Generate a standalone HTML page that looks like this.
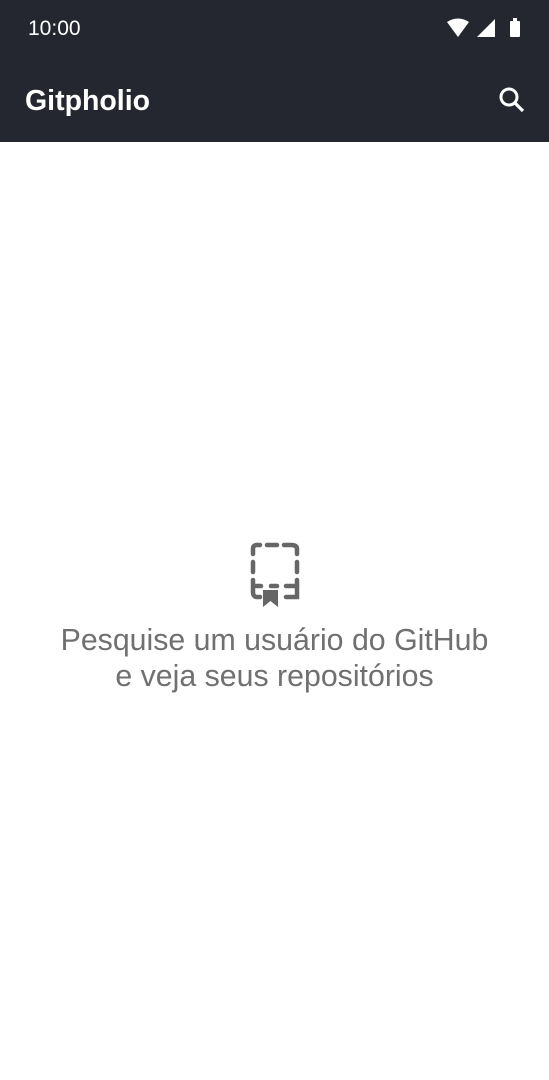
<!DOCTYPE html>
<html><head><meta charset="utf-8"><style>
body{margin:0;width:549px;height:1080px;background:#fff;font-family:"Liberation Sans",sans-serif;position:relative;overflow:hidden}
.bar{position:absolute;left:0;top:0;width:549px;height:142px;background:#24272f}
.time{position:absolute;left:28px;top:17px;color:#fff;font-size:21px}
.title{position:absolute;left:25px;top:85px;color:#fff;font-size:28.5px;font-weight:bold}
.msg{position:absolute;left:0;width:549px;top:623px;text-align:center;color:#707070;font-size:30.3px;line-height:36px}
</style></head><body>
<div class="bar">
<div class="time">10:00</div>
<svg style="position:absolute;left:447px;top:18px" width="80" height="22" viewBox="0 0 80 22">
<path d="M0 4 Q11 -3 22 4 L11 19 Z" fill="#fff"/>
<path d="M30 19 L48 19 L48 1 Z" fill="#fff"/>
<rect x="63" y="3" width="10" height="16" rx="1" fill="#fff"/><rect x="66" y="0" width="4" height="3" fill="#fff"/>
</svg>
<div class="title">Gitpholio</div>
<svg style="position:absolute;left:497px;top:85px" width="30" height="30" viewBox="0 0 30 30">
<circle cx="12" cy="12" r="8" stroke="#fff" stroke-width="3" fill="none"/>
<path d="M18 18 L26 26" stroke="#fff" stroke-width="3.2"/>
</svg>
</div>
<svg style="position:absolute;left:246px;top:540px" width="58" height="70" viewBox="0 0 58 70">
<g stroke="#666" stroke-width="4.5" fill="none" stroke-linecap="round">
<path d="M7 14 V9 Q7 5 11 5 H14"/>
<path d="M21 5 H31"/>
<path d="M38 5 H45 Q51 5 51 9 V14"/>
<path d="M7 22 V32"/><path d="M51 22 V32"/>
<path d="M7 40 V52 Q7 57 11 57 H14"/>
<path d="M51 40 V57 H40"/>
<path d="M10 46 H15"/><path d="M25 46 H31"/><path d="M40 46 H51"/>
</g>
<path d="M17 50 H32 V67 L24.5 61 L17 67 Z" fill="#666"/>
</svg>
<div class="msg">Pesquise um usuário do GitHub<br>e veja seus repositórios</div>
</body></html>
